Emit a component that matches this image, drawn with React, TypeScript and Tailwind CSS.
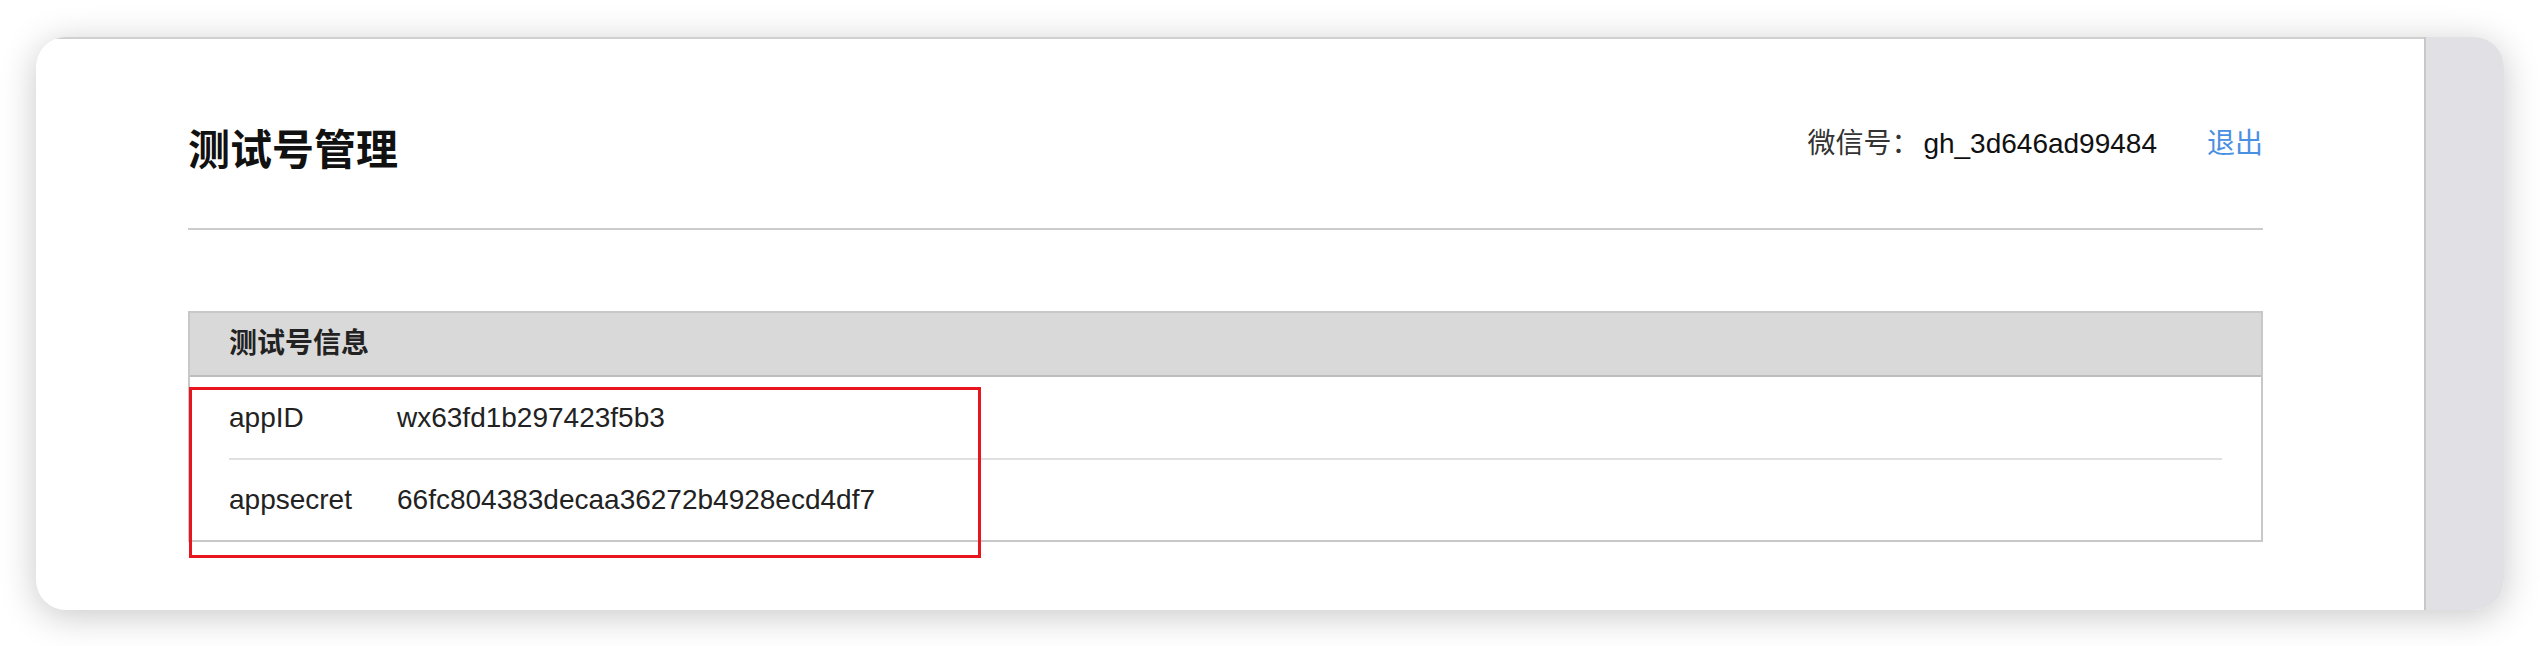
import React from 'react';

const rows = [
  { label: 'appID', value: 'wx63fd1b297423f5b3' },
  { label: 'appsecret', value: '66fc804383decaa36272b4928ecd4df7' },
];

export default function App() {
  return (
    <div className="h-[646px] w-[2540px] overflow-hidden bg-white pt-[37px] pl-[36px] pr-[36px] font-['Liberation_Sans','Noto_Sans_CJK_SC',sans-serif]">
      <div className="flex h-[573px] overflow-hidden rounded-[30px] bg-white shadow-[0_6px_36px_rgba(0,0,0,0.22)]">
        {/* main page */}
        <div className="flex-1 border-t-2 border-[#d0d0d0] pl-[152px] pr-[161px]">
          <div className="flex h-[60px] items-center justify-between mt-[82px]">
            <h1 className="text-[42px] leading-[60px] font-bold text-[#111]">测试号管理</h1>
            <div className="flex self-start mt-[5px] items-center text-[28px] leading-[36px]">
              <span className="text-[#333]">微信号：</span>
              <span className="ml-[4px] text-[#111]">gh_3d646ad99484</span>
              <a className="ml-[50px] text-[#4a90e2]">退出</a>
            </div>
          </div>
          <div className="mt-[47px] border-t-2 border-[#cccccc]" />

          <div className="relative mt-[81px] border-2 border-[#c8c8c8]">
            <div className="h-[64px] border-b-2 border-[#bdbdbd] bg-[#d9d9d9] pl-[39px] text-[28px] leading-[62px] font-bold text-[#222]">
              测试号信息
            </div>
            <div className="px-[39px]">
              {rows.map((r, i) => (
                <div
                  key={r.label}
                  className={`flex items-center text-[28px] text-[#222] ${i === 0 ? 'h-[83px] border-b-2 border-[#e0e0e0]' : 'h-[80px]'}`}
                >
                  <span className="w-[168px]">{r.label}</span>
                  <span>{r.value}</span>
                </div>
              ))}
            </div>
            {/* highlight annotation */}
            <div className="absolute left-[-1px] top-[74px] h-[171px] w-[792px] border-[3px] border-[#e8141e]" />
          </div>
        </div>
        {/* right gutter */}
        <div className="w-[80px] border-l-2 border-[#c8c8c8] bg-[#e1e1e5]" />
      </div>
    </div>
  );
}
